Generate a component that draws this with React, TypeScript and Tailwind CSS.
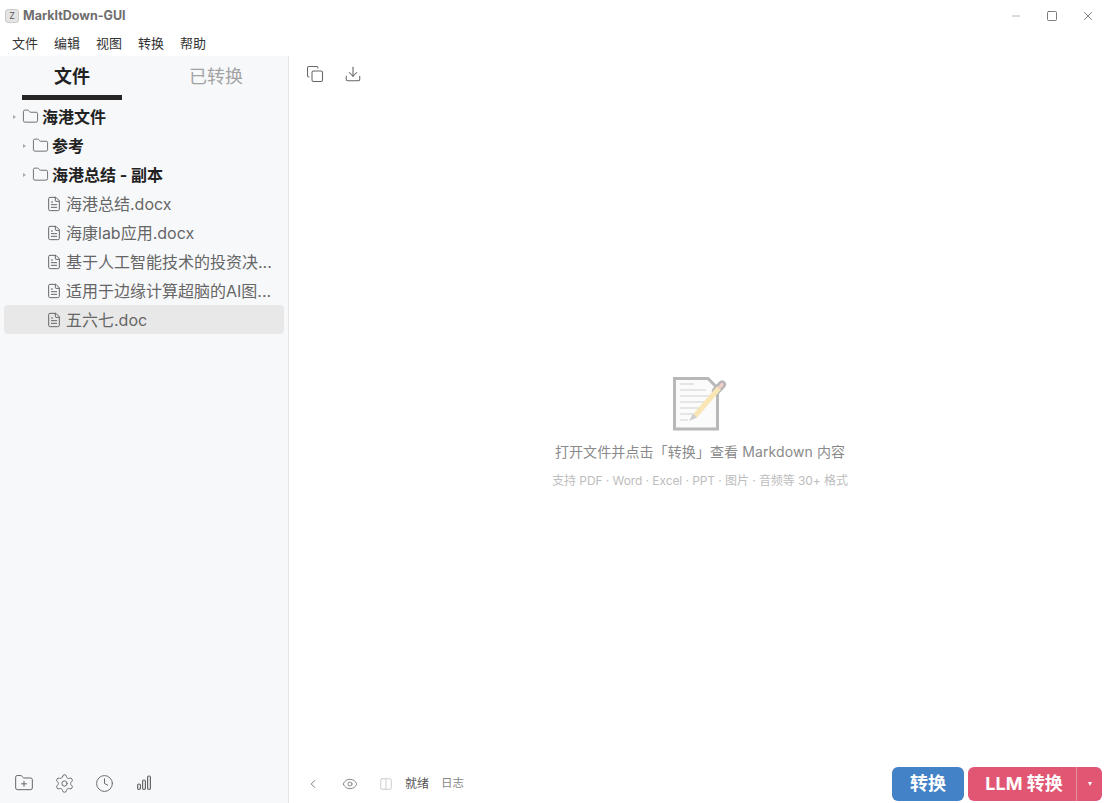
import { ChevronLeft, Clock, Columns2, Copy, Download, Eye, FileText, Folder, FolderPlus, Minus, Settings, Square, X } from "lucide-react";

const font = "font-['Inter','Noto_Sans_CJK_SC',sans-serif]";

const folders = [
  { name: "海港文件", depth: 0 },
  { name: "参考", depth: 1 },
  { name: "海港总结 - 副本", depth: 1 },
];

const files = [
  { name: "海港总结.docx" },
  { name: "海康lab应用.docx" },
  { name: "基于人工智能技术的投资决..." },
  { name: "适用于边缘计算超脑的AI图..." },
  { name: "五六七.doc", selected: true },
];

const menus = ["文件", "编辑", "视图", "转换", "帮助"];

function Sidebar() {
  return (
    <aside className="w-[289px] shrink-0 flex flex-col bg-[#f7f8fa] border-r border-[#e3e4e6]">
      {/* Tabs */}
      <div className="flex h-11 shrink-0">
        <div className="w-[144px] pl-[22px]">
          <div className="w-[100px] h-11 border-b-[5px] border-[#262626] flex justify-center pt-[7px] text-[18px] leading-[27px] font-bold text-[#222]">
            文件
          </div>
        </div>
        <div className="flex-1 flex justify-center pt-[7px] text-[18px] leading-[27px] text-[#a3a3a3]">已转换</div>
      </div>

      {/* Tree */}
      <div className="flex-1 pt-[2px] px-1">
        {folders.map((folder) => (
          <div key={folder.name} className={`flex items-center h-[29px] ${folder.depth === 0 ? "pl-[9px]" : "pl-[19px]"}`}>
            <div className="w-0 h-0 border-y-[2px] border-y-transparent border-l-[3px] border-l-[#aaa]" />
            <Folder className="w-[17px] h-[17px] ml-[6px] text-[#666]" strokeWidth={1.3} />
            <span className="ml-[3px] text-[16px] font-bold text-[#222]">{folder.name}</span>
          </div>
        ))}
        {files.map((file) => (
          <div key={file.name} className={`flex items-center h-[29px] pl-[42px] pr-2 rounded-[4px] ${file.selected ? "bg-[#e8e8e8]" : ""}`}>
            <FileText className="w-[16px] h-[16px] shrink-0 text-[#666]" strokeWidth={1.5} />
            <span className="ml-[4px] text-[16px] text-[#666] whitespace-nowrap">{file.name}</span>
          </div>
        ))}
      </div>

      {/* Bottom icons */}
      <div className="h-[39px] shrink-0 flex items-center pl-[4px] pb-[1px] text-[#666]">
        <div className="w-10 flex justify-center">
          <FolderPlus className="w-[20px] h-[20px]" strokeWidth={1.2} />
        </div>
        <div className="w-10 flex justify-center">
          <Settings className="w-[21px] h-[21px]" strokeWidth={1.1} />
        </div>
        <div className="w-10 flex justify-center">
          <Clock className="w-[19px] h-[19px]" strokeWidth={1.2} />
        </div>
        <div className="w-10 flex justify-center">
          <svg className="w-[18px] h-[18px]" viewBox="0 0 18 18" fill="none" stroke="currentColor" strokeWidth="1.2">
            <rect x="2.6" y="10" width="2.8" height="5.4" rx="1.2" />
            <rect x="7.6" y="6" width="2.8" height="9.4" rx="1.2" />
            <rect x="12.6" y="2" width="2.8" height="13.4" rx="1.2" />
          </svg>
        </div>
      </div>
    </aside>
  );
}

function EmptyState() {
  return (
    <div className="flex-1 flex flex-col items-center pt-[284px] pl-[5px]">
      <svg className="w-[56px] h-[55px]" viewBox="0 0 56 55" fill="none">
        <path d="M2.5 2.5H36L45.5 12V53H2.5Z" fill="#fbfbfb" stroke="#b8b8b8" strokeWidth="3" />
        <path d="M8 8H22M8 14H34M8 20H40M8 26H38M8 32H32M8 38H26M8 44H16" stroke="#dedede" strokeWidth="1.3" />
        <path d="M50 8.5L44 15" stroke="#b5b5b5" strokeWidth="8" strokeLinecap="round" />
        <path d="M47 12L23 40" stroke="#f9e6b4" strokeWidth="5" />
        <path d="M50 8.5L47.5 11.5" stroke="#f1cfc9" strokeWidth="3.5" strokeLinecap="round" />
        <path d="M21 37.5L17 45L25 41.5Z" fill="#cfcfcf" />
      </svg>
      <p className="mt-[11px] text-[14px] tracking-[0.1px] leading-5 text-[#8a8a8a]">打开文件并点击「转换」查看 Markdown 内容</p>
      <p className="mt-[9px] text-[12px] tracking-[-0.07px] leading-5 text-[#bdbdbd]">支持 PDF · Word · Excel · PPT · 图片 · 音频等 30+ 格式</p>
    </div>
  );
}

function StatusBar() {
  return (
    <div className="h-[39px] shrink-0 flex items-center justify-between pl-[17px] pr-1">
      <div className="flex items-center text-[#808080]">
        <ChevronLeft className="w-[14px] h-[14px] text-[#666]" strokeWidth={1.5} />
        <Eye className="w-[16px] h-[16px] ml-[22px]" strokeWidth={1.4} />
        <Columns2 className="w-[14px] h-[14px] ml-[21px] text-[#c8c8c8]" strokeWidth={1.5} />
        <span className="ml-[12px] text-[12px] text-[#555]">就绪</span>
        <span className="ml-[12px] text-[11.5px] text-[#888]">日志</span>
      </div>
      <div className="flex items-center gap-1">
        <button className="w-[72px] h-[34px] rounded-[6px] bg-[#4382c6] text-white text-[18px] font-bold">转换</button>
        <div className="flex h-[34px] w-[134px] rounded-[6px] bg-[#e05673] text-white">
          <button className="w-[108px] pl-1 text-[18px] font-bold">LLM 转换</button>
          <div className="flex-1 flex items-center justify-center border-l border-[#ea8fa2]">
            <div className="w-0 h-0 border-x-[2.5px] border-x-transparent border-t-[4px] border-t-white" />
          </div>
        </div>
      </div>
    </div>
  );
}

export default function App() {
  return (
    <div className={`w-[1106px] h-[803px] flex flex-col bg-white overflow-hidden ${font}`}>
      {/* Title bar */}
      <div className="h-8 shrink-0 flex items-center pl-[5px]">
        <div className="w-[14px] h-[14px] rounded-[3px] bg-[#e4e4e4] border border-[#ccc] flex items-center justify-center text-[9px] text-[#555]">Z</div>
        <span className="ml-[4px] text-[12.5px] font-bold text-[#6e6e6e]">MarkItDown-GUI</span>
        <div className="ml-auto flex items-center gap-[23px] pr-[11px] text-[#555]">
          <Minus className="w-[12px] h-[12px] mr-[1px] text-[#999]" strokeWidth={1.5} />
          <Square className="w-[12px] h-[12px]" strokeWidth={1.5} />
          <X className="w-[14px] h-[14px]" strokeWidth={1.3} />
        </div>
      </div>

      {/* Menu */}
      <div className="h-6 shrink-0 flex items-center gap-4 pl-[12px] text-[13px] text-[#333]">
        {menus.map((menu) => (
          <span key={menu}>{menu}</span>
        ))}
      </div>

      <div className="flex-1 flex min-h-0">
        <Sidebar />
        <main className="flex-1 flex flex-col min-w-0">
          <div className="h-9 shrink-0 flex items-center gap-[20px] pl-[17px] text-[#666]">
            <Copy className="w-[18px] h-[18px]" strokeWidth={1.4} />
            <Download className="w-[18px] h-[18px]" strokeWidth={1.4} />
          </div>
          <EmptyState />
          <StatusBar />
        </main>
      </div>
    </div>
  );
}
